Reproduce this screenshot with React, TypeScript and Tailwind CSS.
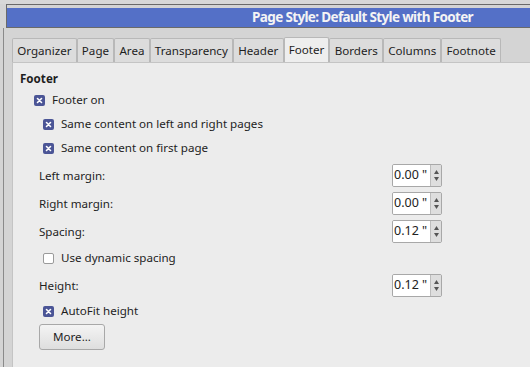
import React from "react";

const font = { fontFamily: '"Noto Sans", "Open Sans", sans-serif' };

function Check({ checked }: { checked: boolean }) {
  if (checked)
    return (
      <span className="w-[11px] h-[11px] rounded-[2px] bg-[#4b5596] flex items-center justify-center">
        <svg width="7" height="7" viewBox="0 0 7 7">
          <path d="M1.5 1.5 L5.5 5.5 M5.5 1.5 L1.5 5.5" stroke="#ffffff" strokeWidth="1.6" strokeLinecap="round" />
        </svg>
      </span>
    );
  return <span className="w-[11px] h-[11px] rounded-[2px] bg-white border border-[#9a9a9a]" />;
}

function Spin({ value }: { value: string }) {
  return (
    <div className="flex h-[23px] w-[50px] border border-[#a8a8a8] rounded-[2px] overflow-hidden">
      <div className="flex-1 bg-white flex items-center pl-[1px] text-[12.5px] text-[#222]">{value}</div>
      <div className="w-[11px] bg-[#dedede] border-l border-[#bdbdbd] flex flex-col items-center justify-center gap-[3px]">
        <svg width="5" height="4" viewBox="0 0 5 4"><path d="M2.5 0 L5 4 L0 4 Z" fill="#555" /></svg>
        <svg width="5" height="4" viewBox="0 0 5 4"><path d="M0 0 L5 0 L2.5 4 Z" fill="#555" /></svg>
      </div>
    </div>
  );
}

const tabs = ["Organizer", "Page", "Area", "Transparency", "Header", "Footer", "Borders", "Columns", "Footnote"];

export default function App() {
  return (
    <div style={font} className="w-[530px] h-[367px] bg-[#d4d4d4] overflow-hidden text-[11.6px] text-[#1e1e1e]">
      <div className="h-[4px] bg-[#d8d8d8]" />
      <div className="h-[24px] ml-[6px] border-t-[1px] border-l-[1px] border-b-[1px] border-[#6a6a6a] bg-[#d4d4d4] pt-[3px] pl-0">
        <div className="h-[19px] bg-[#5470c7] flex items-center justify-end pr-[57px] text-[13.5px] tracking-[-0.65px] font-bold text-[#f4f4f4]">
          Page Style: Default Style with Footer
        </div>
      </div>
      <div className="ml-[3px] border-l border-[#8a8a8a] h-[340px] pt-[10px] pl-[8px]">
        <div className="flex items-end h-[24px] gap-0">
          {tabs.map((t) => (
            <div
              key={t}
              className={
                "h-[24px] px-[4.2px] flex items-center border border-b-0 border-[#b8b8b8] rounded-t-[2px] " +
                (t === "Footer" ? "bg-[#eeeeee] h-[25px]" : "bg-[#dcdcdc]")
              }
            >
              {t}
            </div>
          ))}
        </div>
        <div className="bg-[#ececec] border-l border-t border-[#c4c4c4] h-[310px] pl-[7px] pt-[8px]">
          <div className="font-bold h-[16px] leading-[16px]">Footer</div>
          <div className="flex items-center gap-[7px] ml-[14px] mt-[5px] h-[16px]">
            <Check checked /> <span>Footer on</span>
          </div>
          <div className="flex items-center gap-[7px] ml-[23px] mt-[8px] h-[16px]">
            <Check checked /> <span>Same content on left and right pages</span>
          </div>
          <div className="flex items-center gap-[7px] ml-[23px] mt-[8px] h-[16px]">
            <Check checked /> <span>Same content on first page</span>
          </div>
          <div className="flex items-center justify-between w-[403px] ml-[19px] mt-[8px] h-[23px]">
            <span>Left margin:</span>
            <Spin value='0.00 "' />
          </div>
          <div className="flex items-center justify-between w-[403px] ml-[19px] mt-[5px] h-[23px]">
            <span>Right margin:</span>
            <Spin value='0.00 "' />
          </div>
          <div className="flex items-center justify-between w-[403px] ml-[19px] mt-[5px] h-[23px]">
            <span>Spacing:</span>
            <Spin value='0.12 "' />
          </div>
          <div className="flex items-center gap-[7px] ml-[23px] mt-[7px] h-[16px]">
            <Check checked={false} /> <span>Use dynamic spacing</span>
          </div>
          <div className="flex items-center justify-between w-[403px] ml-[19px] mt-[8px] h-[23px]">
            <span>Height:</span>
            <Spin value='0.12 "' />
          </div>
          <div className="flex items-center gap-[7px] ml-[23px] mt-[6px] h-[16px]">
            <Check checked /> <span>AutoFit height</span>
          </div>
          <div className="ml-[19px] mt-[5px] w-[66px] h-[26px] rounded-[3px] border border-[#a8a8a8] bg-gradient-to-b from-[#f4f4f4] to-[#dedede] flex items-center justify-center">
            More...
          </div>
        </div>
      </div>
    </div>
  );
}
